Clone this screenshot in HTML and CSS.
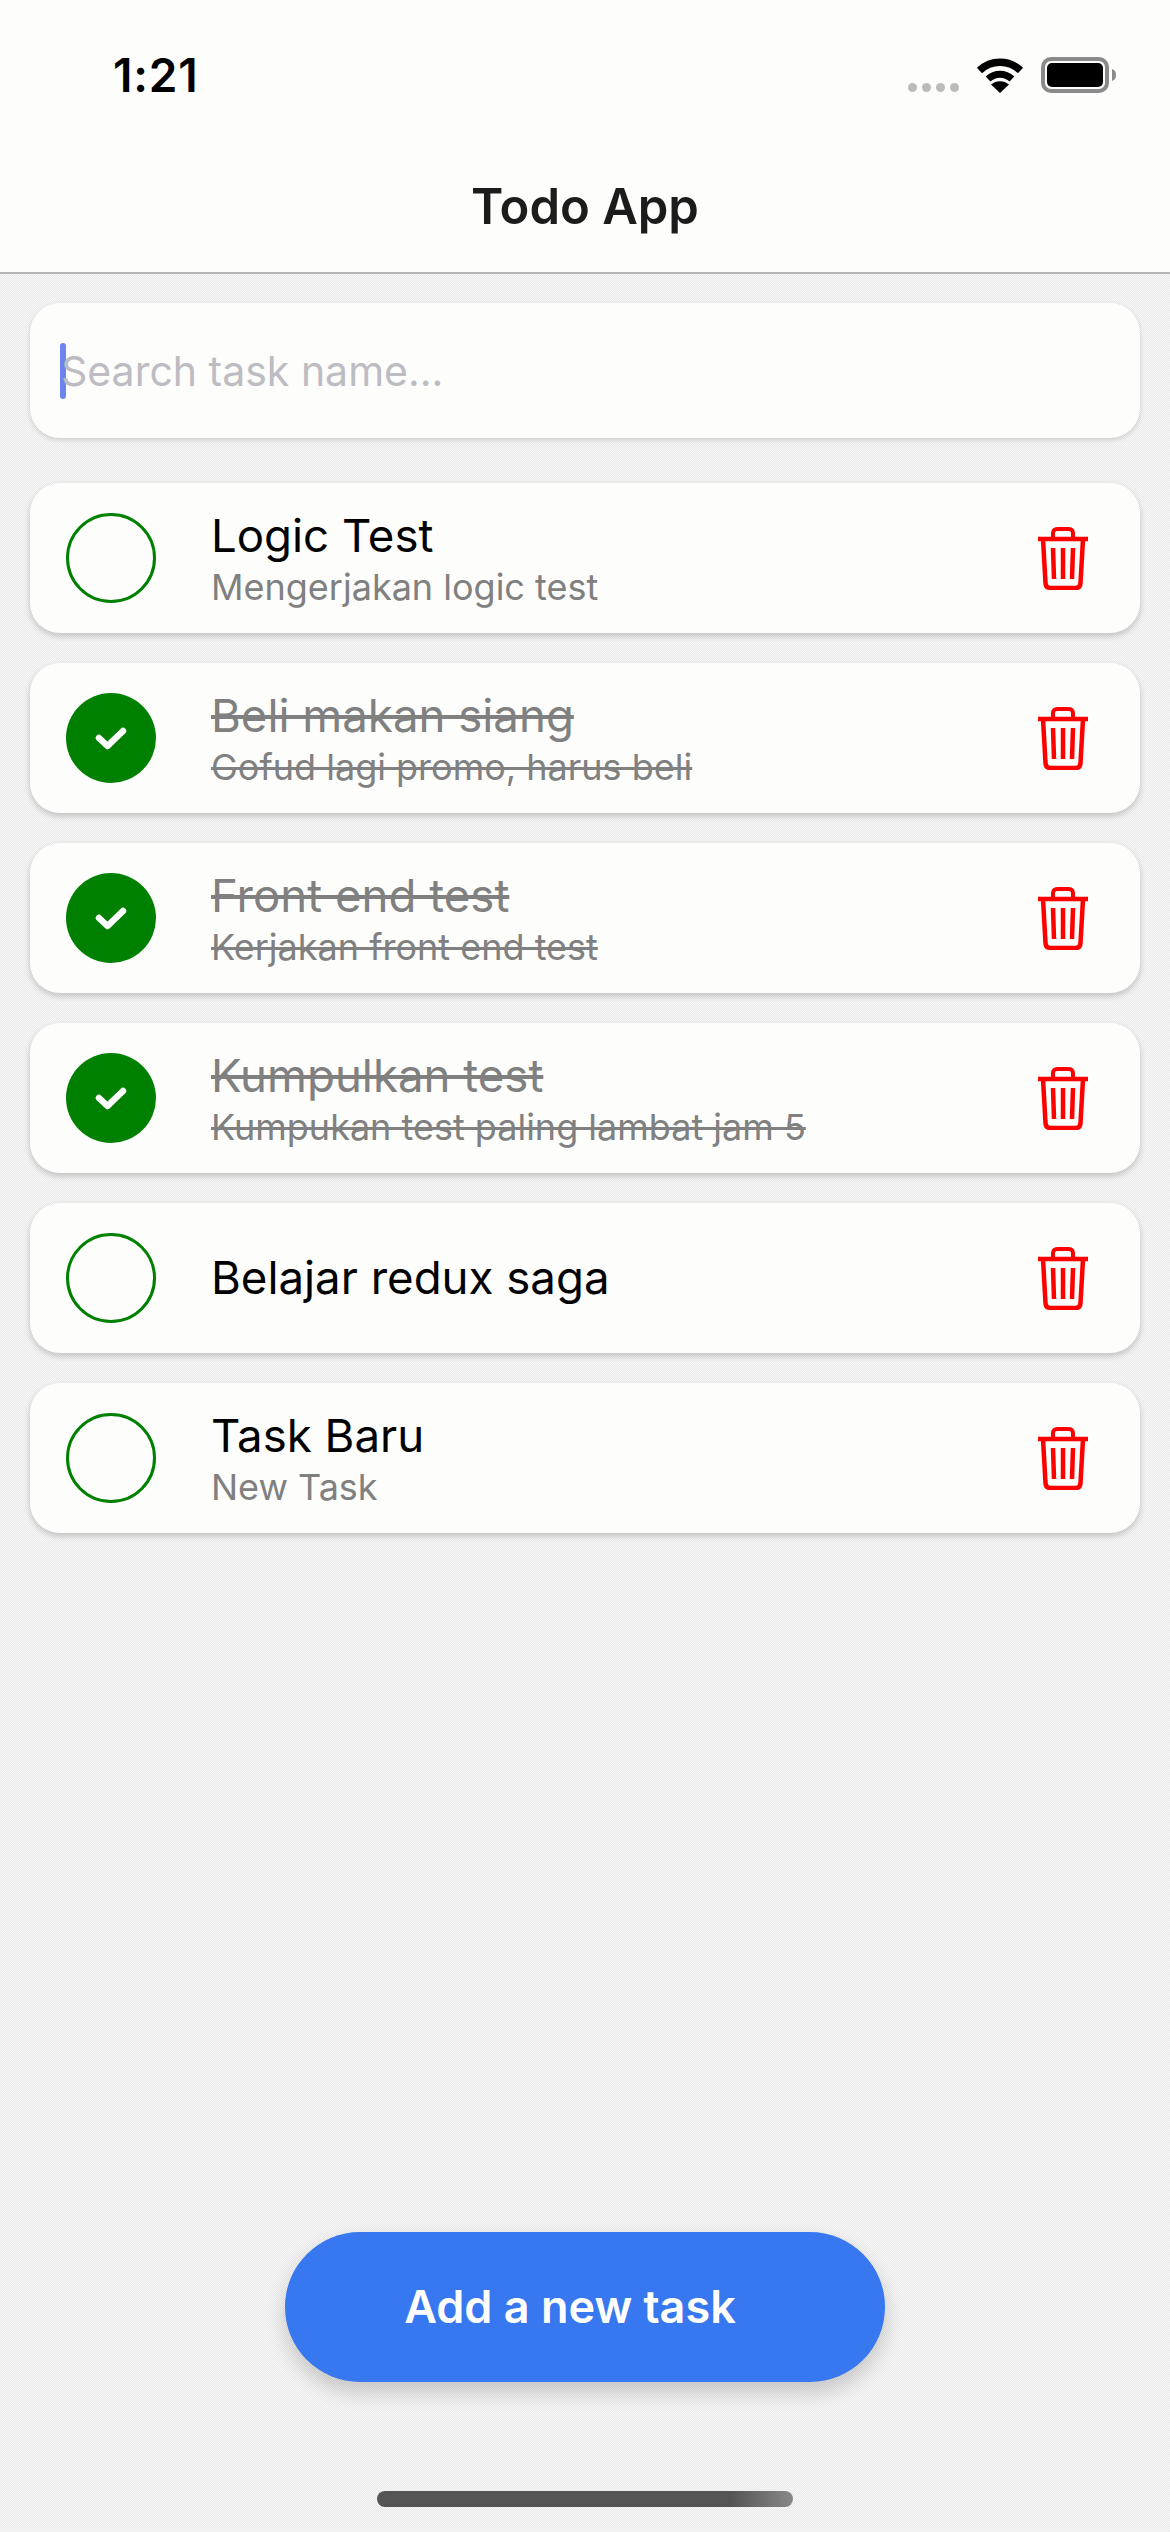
FILE: index.html
```html
<!DOCTYPE html>
<html lang="en">
<head>
    <meta charset="UTF-8">
    <meta name="viewport" content="width=device-width, initial-scale=1.0">
    <title>Todo App</title>
    <link rel="stylesheet" href="styles.css">
</head>
<body>
    <header class="top">
        <div class="status-bar">
            <span class="time">1:21</span>
            <div class="status-icons">
                <div class="signal"><i></i><i></i><i></i><i></i></div>
                <svg class="wifi" width="48" height="36" viewBox="0 0 48 36">
                    <path d="M3.5 13.5C15 2.5 33 2.5 44.500 13.500" fill="none" stroke="#000" stroke-width="7.500"/>
                    <path d="M12 22C19 15.500 29 15.500 36 22" fill="none" stroke="#000" stroke-width="7"/>
                    <path d="M24 36L15 27.500C20 23 28 23 33 27.500Z" fill="#000"/>
                </svg>
                <svg class="battery" width="76" height="36" viewBox="0 0 76 36">
                    <rect x="2" y="2" width="64" height="32" rx="8" fill="none" stroke="#8a8a8a" stroke-width="4"/>
                    <rect x="6" y="6" width="56" height="24" rx="5" fill="#000"/>
                    <path d="M71 12C74 13 75 15 75 18C75 21 74 23 71 24Z" fill="#8a8a8a"/>
                </svg>
            </div>
        </div>
        <h1 class="title">Todo App</h1>
    </header>

    <main class="content">
        <div class="search">
            <span class="caret"></span>
            <span class="placeholder">Search task name...</span>
        </div>

        <ul class="task-list">
            <li class="task">
                <span class="check"></span>
                <div class="task-text">
                    <div class="task-name">Logic Test</div>
                    <div class="task-desc">Mengerjakan logic test</div>
                </div>
                <svg class="trash" width="50" height="63" viewBox="0 0 50 63"><use href="#trash-icon"/></svg>
            </li>
            <li class="task done">
                <span class="check">
                    <svg width="90" height="90" viewBox="0 0 90 90"><use href="#check-icon"/></svg>
                </span>
                <div class="task-text">
                    <div class="task-name">Beli makan siang</div>
                    <div class="task-desc">Gofud lagi promo, harus beli</div>
                </div>
                <svg class="trash" width="50" height="63" viewBox="0 0 50 63"><use href="#trash-icon"/></svg>
            </li>
            <li class="task done">
                <span class="check">
                    <svg width="90" height="90" viewBox="0 0 90 90"><use href="#check-icon"/></svg>
                </span>
                <div class="task-text">
                    <div class="task-name">Front end test</div>
                    <div class="task-desc">Kerjakan front end test</div>
                </div>
                <svg class="trash" width="50" height="63" viewBox="0 0 50 63"><use href="#trash-icon"/></svg>
            </li>
            <li class="task done">
                <span class="check">
                    <svg width="90" height="90" viewBox="0 0 90 90"><use href="#check-icon"/></svg>
                </span>
                <div class="task-text">
                    <div class="task-name">Kumpulkan test</div>
                    <div class="task-desc">Kumpukan test paling lambat jam 5</div>
                </div>
                <svg class="trash" width="50" height="63" viewBox="0 0 50 63"><use href="#trash-icon"/></svg>
            </li>
            <li class="task">
                <span class="check"></span>
                <div class="task-text">
                    <div class="task-name">Belajar redux saga</div>
                </div>
                <svg class="trash" width="50" height="63" viewBox="0 0 50 63"><use href="#trash-icon"/></svg>
            </li>
            <li class="task">
                <span class="check"></span>
                <div class="task-text">
                    <div class="task-name">Task Baru</div>
                    <div class="task-desc">New Task</div>
                </div>
                <svg class="trash" width="50" height="63" viewBox="0 0 50 63"><use href="#trash-icon"/></svg>
            </li>
        </ul>

        <button class="add-button" type="button">Add a new task</button>
        <div class="home-bar"></div>
    </main>

    <!-- shared icons -->
    <svg class="icon-defs" width="0" height="0">
        <symbol id="trash-icon" viewBox="0 0 50 63">
            <path d="M0 12H50" fill="none" stroke="#f00" stroke-width="4.500"/>
            <path d="M15 11V6C15 3.500 17 2 19 2H31C33 2 35 3.500 35 6V11" fill="none" stroke="#f00" stroke-width="4"/>
            <path d="M5 12L7.500 56C7.700 59 9.500 61 12.500 61H37.500C40.500 61 42.300 59 42.500 56L45 12" fill="none" stroke="#f00" stroke-width="4.500"/>
            <path d="M15 21L16 52M25 21V52M35 21L34 52" fill="none" stroke="#f00" stroke-width="4.500"/>
        </symbol>
        <symbol id="check-icon" viewBox="0 0 90 90">
            <path d="M33 45L41.500 53L57 38" fill="none" stroke="#fff" stroke-width="6.500" stroke-linecap="round" stroke-linejoin="round"/>
        </symbol>
    </svg>
</body>
</html>
```
FILE: styles.css
```css
* {
    box-sizing: border-box;
}

body {
    margin: 0;
    height: 2532px;
    display: flex;
    flex-direction: column;
    font-family: Inter, "Noto Sans", sans-serif;
    color: #000;
    background-color: #f1f1f1;
    background-image: repeating-conic-gradient(#e9e9e9 0 25%, #f8f8f8 0 50%);
    background-size: 2px 2px;
}

.top {
    height: 274px;
    background-color: #fdfdfb;
    border-bottom: 2px solid #b4b4b4;
}

.status-bar {
    height: 150px;
    display: flex;
    justify-content: space-between;
    align-items: center;
    padding: 0 53px 0 113px;
}

.time {
    font-size: 46px;
    font-weight: 600;
    letter-spacing: 0.8px;
}

.status-icons {
    display: flex;
    align-items: center;
}

.signal {
    display: flex;
    gap: 5px;
    margin: 24px 17px 0 0;
}

.signal i {
    width: 9px;
    height: 9px;
    border-radius: 50%;
    background-color: #bbb;
}

.battery {
    margin-left: 17px;
}

.title {
    margin: 0;
    text-align: center;
    font-size: 49px;
    font-weight: 600;
    line-height: 114px;
    color: #1c1c1c;
}

.content {
    flex: 1;
    display: flex;
    flex-direction: column;
    padding: 29px 30px 25px;
}

.search {
    height: 135px;
    display: flex;
    align-items: center;
    padding-left: 30px;
    background-color: #fdfdfb;
    border-radius: 30px;
    box-shadow: 0 2px 5px rgba(0, 0, 0, 0.15);
}

.caret {
    width: 6px;
    height: 56px;
    border-radius: 3px;
    background-color: #6b85ee;
}

.placeholder {
    margin-left: -5px;
    font-size: 41px;
    color: #bcbcc2;
}

.task-list {
    list-style: none;
    margin: 45px 0 0;
    padding: 0;
    display: flex;
    flex-direction: column;
    gap: 30px;
}

.task {
    height: 150px;
    display: flex;
    align-items: center;
    padding: 0 52px 0 36px;
    background-color: #fdfdfb;
    border-radius: 30px;
    box-shadow: 0 3px 6px rgba(0, 0, 0, 0.2);
}

.check {
    flex: none;
    width: 90px;
    height: 90px;
    border: 3px solid #008000;
    border-radius: 50%;
}

.done .check {
    border: none;
    background-color: #008000;
}

.check svg {
    display: block;
}

.task-text {
    flex: 1;
    margin-left: 55px;
}

.task-name {
    font-size: 45.6px;
    line-height: 52px;
}

.task-desc {
    margin: 3px 0 -3px;
    font-size: 36px;
    line-height: 44px;
    color: #808080;
}

.done .task-name,
.done .task-desc {
    color: #808080;
    text-decoration: line-through;
}

.add-button {
    display: block;
    width: 600px;
    height: 150px;
    margin: auto auto 0;
    padding: 0 30px 2px 0;
    border: none;
    border-radius: 75px;
    background-color: #3777f0;
    color: #fff;
    font-family: inherit;
    font-size: 45px;
    font-weight: 600;
    box-shadow: 0 10px 20px rgba(0, 0, 0, 0.18);
}

.home-bar {
    width: 416px;
    height: 16px;
    margin: 109px auto 0;
    border-radius: 8px;
    background: linear-gradient(90deg, #555 0, #555 85%, #888 100%);
}

.icon-defs {
    position: absolute;
}
```
